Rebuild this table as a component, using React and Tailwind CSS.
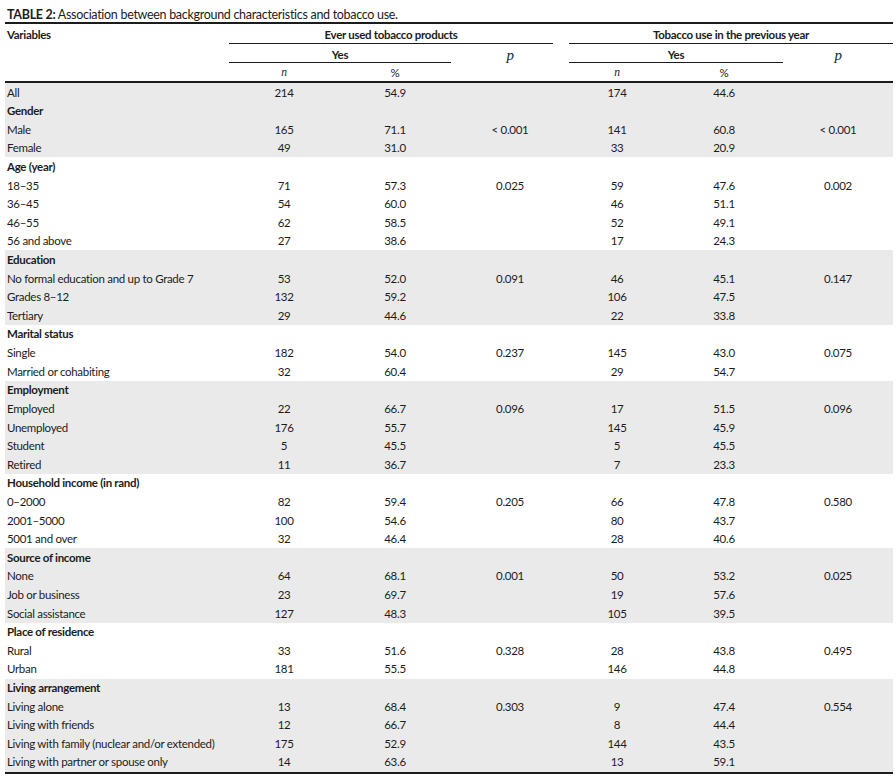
const sections = [
  {
    gray: true,
    rows: [
      ["All", "214", "54.9", "", "174", "44.6", ""],
      ["Gender"],
      ["Male", "165", "71.1", "< 0.001", "141", "60.8", "< 0.001"],
      ["Female", "49", "31.0", "", "33", "20.9", ""],
    ],
  },
  {
    gray: false,
    rows: [
      ["Age (year)"],
      ["18–35", "71", "57.3", "0.025", "59", "47.6", "0.002"],
      ["36–45", "54", "60.0", "", "46", "51.1", ""],
      ["46–55", "62", "58.5", "", "52", "49.1", ""],
      ["56 and above", "27", "38.6", "", "17", "24.3", ""],
    ],
  },
  {
    gray: true,
    rows: [
      ["Education"],
      ["No formal education and up to Grade 7", "53", "52.0", "0.091", "46", "45.1", "0.147"],
      ["Grades 8–12", "132", "59.2", "", "106", "47.5", ""],
      ["Tertiary", "29", "44.6", "", "22", "33.8", ""],
    ],
  },
  {
    gray: false,
    rows: [
      ["Marital status"],
      ["Single", "182", "54.0", "0.237", "145", "43.0", "0.075"],
      ["Married or cohabiting", "32", "60.4", "", "29", "54.7", ""],
    ],
  },
  {
    gray: true,
    rows: [
      ["Employment"],
      ["Employed", "22", "66.7", "0.096", "17", "51.5", "0.096"],
      ["Unemployed", "176", "55.7", "", "145", "45.9", ""],
      ["Student", "5", "45.5", "", "5", "45.5", ""],
      ["Retired", "11", "36.7", "", "7", "23.3", ""],
    ],
  },
  {
    gray: false,
    rows: [
      ["Household income (in rand)"],
      ["0–2000", "82", "59.4", "0.205", "66", "47.8", "0.580"],
      ["2001–5000", "100", "54.6", "", "80", "43.7", ""],
      ["5001 and over", "32", "46.4", "", "28", "40.6", ""],
    ],
  },
  {
    gray: true,
    rows: [
      ["Source of income"],
      ["None", "64", "68.1", "0.001", "50", "53.2", "0.025"],
      ["Job or business", "23", "69.7", "", "19", "57.6", ""],
      ["Social assistance", "127", "48.3", "", "105", "39.5", ""],
    ],
  },
  {
    gray: false,
    rows: [
      ["Place of residence"],
      ["Rural", "33", "51.6", "0.328", "28", "43.8", "0.495"],
      ["Urban", "181", "55.5", "", "146", "44.8", ""],
    ],
  },
  {
    gray: true,
    rows: [
      ["Living arrangement"],
      ["Living alone", "13", "68.4", "0.303", "9", "47.4", "0.554"],
      ["Living with friends", "12", "66.7", "", "8", "44.4", ""],
      ["Living with family (nuclear and/or extended)", "175", "52.9", "", "144", "43.5", ""],
      ["Living with partner or spouse only", "14", "63.6", "", "13", "59.1", ""],
    ],
  },
];

const cols = "grid grid-cols-[224px_110px_112px_118px_96px_118px_110px]";

const Row = ({ cells }) => {
  if (cells.length === 1) {
    return (
      <div className={`${cols} h-[18.62px] items-center`}>
        <div className="pl-[2px] font-bold">{cells[0]}</div>
      </div>
    );
  }
  return (
    <div className={`${cols} h-[18.62px] items-center`}>
      <div className="pl-[2px]">{cells[0]}</div>
      {cells.slice(1).map((c, i) => (
        <div key={i} className="text-center">
          {c}
        </div>
      ))}
    </div>
  );
};

export default function App() {
  return (
    <div className="min-h-[778px] bg-white text-[#1c1c1c] font-['Lato',sans-serif] text-[11.5px] tracking-[-0.3px] leading-none pt-[9px]">
      <div className="ml-[5px] w-[888px]">
        <div className="pl-[2px] text-[12.5px] h-[13px]">
          <span className="font-bold">TABLE 2:</span> Association between background characteristics and tobacco use.
        </div>
        <div className="h-[2px] bg-[#1c1c1c]" />

        {/* header */}
        <div className={cols}>
          <div className="pl-[2px] pt-[5px] font-bold h-[19px]">Variables</div>
          <div className="col-span-3 flex flex-col">
            <div className="h-[19px] pt-[5px] text-center font-bold mr-[16px]">Ever used tobacco products</div>
            <div className="h-px bg-[#1c1c1c] mr-[16px]" />
          </div>
          <div className="col-span-3 flex flex-col">
            <div className="h-[19px] pt-[5px] text-center font-bold">Tobacco use in the previous year</div>
            <div className="h-px bg-[#1c1c1c]" />
          </div>
        </div>
        <div className={cols}>
          <div />
          <div className="col-span-2 flex flex-col">
            <div className="h-[18px] pt-[5px] text-center font-bold">Yes</div>
            <div className="h-px bg-[#1c1c1c]" />
          </div>
          <div className="h-[19px] pt-[4px] text-center font-['Liberation_Serif',serif] italic text-[15px]">p</div>
          <div className="col-span-2 flex flex-col">
            <div className="h-[18px] pt-[5px] text-center font-bold">Yes</div>
            <div className="h-px bg-[#1c1c1c]" />
          </div>
          <div className="h-[19px] pt-[4px] text-center font-['Liberation_Serif',serif] italic text-[15px]">p</div>
        </div>
        <div className={`${cols} h-[18px] items-center pt-[1px]`}>
          <div />
          <div className="text-center font-['Liberation_Serif',serif] italic text-[11.5px]">n</div>
          <div className="text-center">%</div>
          <div />
          <div className="text-center font-['Liberation_Serif',serif] italic text-[11.5px]">n</div>
          <div className="text-center">%</div>
          <div />
        </div>
        <div className="h-[2px] bg-[#1c1c1c]" />

        {/* body */}
        {sections.map((s, si) => (
          <div key={si} className={s.gray ? "bg-[#eaeaea]" : "bg-white"}>
            {s.rows.map((r, ri) => (
              <Row key={ri} cells={r} />
            ))}
          </div>
        ))}
        <div className="h-[2px] bg-[#1c1c1c]" />
      </div>
    </div>
  );
}
